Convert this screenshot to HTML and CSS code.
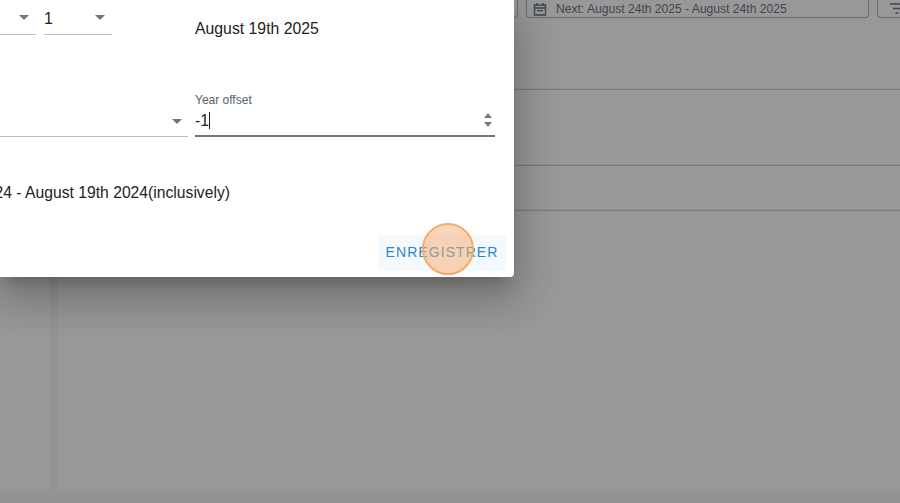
FILE: index.html
```html
<!DOCTYPE html>
<html lang="fr">
<head>
<meta charset="utf-8">
<title>Date range</title>
<link rel="stylesheet" href="styles.css">
</head>
<body>
<div class="page">
  <div class="toolbar">
    <div class="tool tool-prev"></div>
    <div class="tool tool-next">
      <svg class="cal" viewBox="0 0 14 14" width="14" height="14"><path d="M1.5 3h11v10h-11zM1.5 6h11M4 1v3M10 1v3" fill="none" stroke="#3e4650" stroke-width="1.4"/><path d="M4 8h6v1.3H4z" fill="#3e4650"/></svg>
      <span>Next: August 24th 2025 - August 24th 2025</span>
    </div>
    <div class="tool tool-filter">
      <svg viewBox="0 0 16 12" width="16" height="12"><path d="M1 1h14M4 5.500h8M6.500 10h3" stroke="#3e4650" stroke-width="1.500" fill="none"/></svg>
    </div>
  </div>
  <div class="rule rule-a"></div>
  <div class="rule rule-b"></div>
  <div class="rule rule-c"></div>
</div>
<div class="lower">
  <div class="pane pane-left"></div>
  <div class="pane pane-right"></div>
</div>

<div class="modal">
  <div class="modal-shift">
    <div class="row row-one">
      <div class="select select-a"><span class="value"></span><i class="caret-down"></i></div>
      <div class="select select-b"><span class="value">1</span><i class="caret-down"></i></div>
      <div class="date">August 19th 2025</div>
    </div>
    <div class="row row-two">
      <div class="select select-c"><span class="value"></span><i class="caret-down"></i></div>
      <div class="field">
        <div class="label">Year offset</div>
        <div class="input"><span>-1</span><i class="cursor"></i>
          <svg class="spin" viewBox="0 0 10 16" width="10" height="16"><path d="M5 1l4 5H1zM5 15l4-5H1z" fill="#7b7b7b"/></svg>
        </div>
      </div>
    </div>
    <div class="summary">August 19th 2024 - August 19th 2024(inclusively)</div>
    <div class="actions"><button class="save">ENREGISTRER</button></div>
  </div>
</div>
<div class="click"></div>
</body>
</html>
```

FILE: styles.css
```css
* { box-sizing: border-box; }
html, body { margin: 0; height: 503px; overflow: hidden; }
body {
  position: relative;
  width: 900px;
  background: #939393;
  font-family: "Liberation Sans", Arial, sans-serif;
  color: #222;
}
.page {
  height: 212px;
  display: flex;
  flex-direction: column;
  padding-left: 514px;
  background: #989898;
}
.toolbar { height: 18px; display: flex; }
.tool {
  flex: none;
  height: 18px;
  border: 1px solid #6d6d6d;
  border-top: 0;
  border-radius: 0 0 4px 4px;
  display: flex;
  align-items: center;
  font-size: 12.1px;
  color: #3e4650;
}
.tool-prev { width: 4px; border-left: 0; border-radius: 0 0 4px 0; }
.tool-next { width: 343px; margin-left: 8px; padding-left: 6px; gap: 9px; }
.cal { flex: none; }
.tool-filter { flex: 1; margin-left: 8px; padding-left: 11px; border-right: 0; border-radius: 0 0 0 4px; }
.rule { height: 2px; flex: none; background: #8f8f8f; border-bottom: 1px solid #7c7c7c; }
.rule-a { margin-top: 70px; }
.rule-b { margin-top: 74px; }
.rule-c { margin-top: 43px; }
.lower { height: 279px; display: flex; gap: 8px; }
.pane { background: #989898; }
.pane-left { width: 50px; }
.pane-right { flex: 1; }

.modal {
  position: absolute;
  left: 0;
  top: 0;
  width: 514px;
  height: 277px;
  background: #fff;
  border-radius: 0 0 4px 0;
  overflow: hidden;
  box-shadow: 0 11px 15px -7px rgba(0,0,0,.2), 0 24px 38px 3px rgba(0,0,0,.14), 0 9px 46px 8px rgba(0,0,0,.12);
}
.modal-shift { margin-left: -120px; width: 634px; display: flex; flex-direction: column; }
.row { display: flex; }
.row-one { height: 35px; gap: 8px; align-items: flex-end; }
.select {
  position: relative;
  border-bottom: 1px solid #bdbdbd;
  font-size: 16px;
  height: 35px;
  line-height: 18px;
  padding-top: 10px;
  flex: none;
}
.select-a { width: 156px; }
.select-b { width: 68px; }
.caret-down {
  position: absolute;
  right: 7px;
  top: 15px;
  border-left: 5px solid transparent;
  border-right: 5px solid transparent;
  border-top: 5px solid #757575;
}
.date { margin-left: 75px; font-size: 15.8px; line-height: 18px; align-self: flex-start; padding-top: 20px; height: 35px; white-space: nowrap; }
.row-two { margin-top: 57px; gap: 7px; }
.select-c { width: 308px; height: 45px; padding-top: 0; }
.select-c .caret-down { right: 6px; top: 27px; }
.field { width: 300px; }
.label { font-size: 12px; line-height: 14px; height: 15px; color: #56626d; margin-top: 1px; }
.input {
  position: relative;
  display: flex;
  align-items: center;
  height: 29px;
  padding-bottom: 2px;
  border-bottom: 2px solid #6a7682;
  font-size: 15.8px;
}
.input span { line-height: 18px; }
.cursor { width: 1px; height: 17px; background: #222; }
.spin { position: absolute; right: 2px; top: 4px; }
.summary { margin-top: 47px; margin-left: -22px; font-size: 15.7px; line-height: 18px; white-space: nowrap; text-align: right; width: 372px; }
.actions { display: flex; justify-content: flex-end; padding-right: 8px; margin-top: 33px; }
.save {
  width: 128px;
  height: 36px;
  border: 0;
  border-radius: 4px;
  background: #f4f9fe;
  color: #2b88c8;
  font-family: "Liberation Sans", Arial, sans-serif;
  font-size: 14px;
  letter-spacing: 1.07px;
  padding: 0 0 2px;
}
.click {
  position: absolute;
  left: 422px;
  top: 223px;
  width: 52px;
  height: 52px;
  border-radius: 50%;
  background: rgba(250,170,110,.5);
  border: 2px solid #f3ad6c;
}
```
